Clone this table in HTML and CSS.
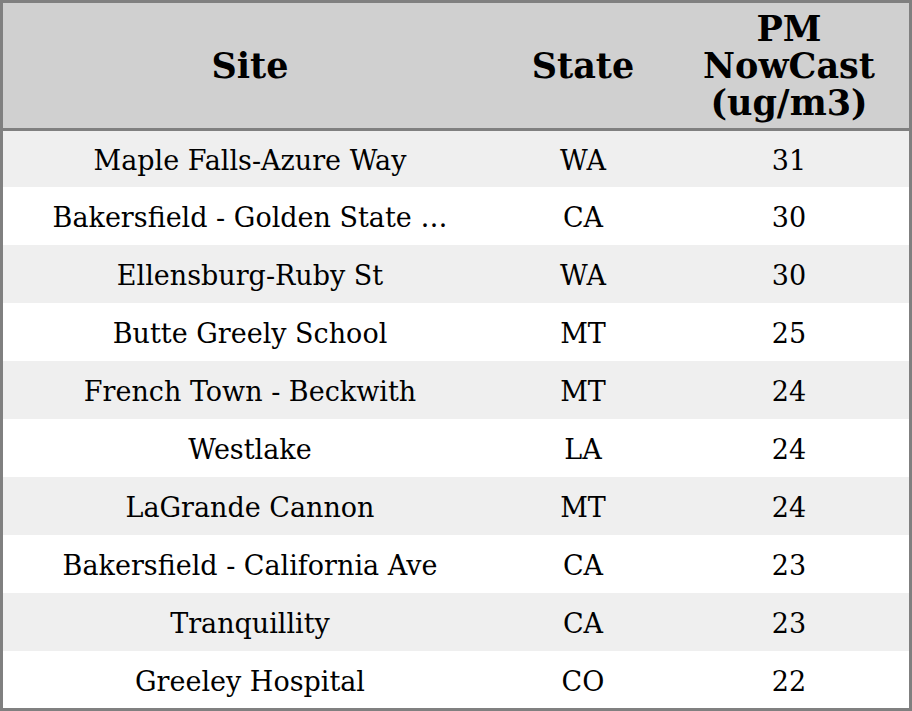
FILE: index.html
```html
<!DOCTYPE html>
<html>
<head>
<meta charset="utf-8">
<link rel="stylesheet" href="styles.css">
</head>
<body>
<table class="tbl">
  <colgroup>
    <col class="c-site">
    <col class="c-state">
    <col class="c-pm">
  </colgroup>
  <thead>
    <tr><th>Site</th><th>State</th><th>PM<br>NowCast<br>(ug/m3)</th></tr>
  </thead>
  <tbody>
    <tr><td>Maple Falls-Azure Way</td><td>WA</td><td>31</td></tr>
    <tr><td>Bakersfield - Golden State …</td><td>CA</td><td>30</td></tr>
    <tr><td>Ellensburg-Ruby St</td><td>WA</td><td>30</td></tr>
    <tr><td>Butte Greely School</td><td>MT</td><td>25</td></tr>
    <tr><td>French Town - Beckwith</td><td>MT</td><td>24</td></tr>
    <tr><td>Westlake</td><td>LA</td><td>24</td></tr>
    <tr><td>LaGrande Cannon</td><td>MT</td><td>24</td></tr>
    <tr><td>Bakersfield - California Ave</td><td>CA</td><td>23</td></tr>
    <tr><td>Tranquillity</td><td>CA</td><td>23</td></tr>
    <tr><td>Greeley Hospital</td><td>CO</td><td>22</td></tr>
  </tbody>
</table>
</body>
</html>
```
FILE: styles.css
```css
html, body {
  margin: 0;
  padding: 0;
  background: #ffffff;
}
.tbl {
  box-sizing: border-box;
  width: 912px;
  border-collapse: separate;
  border-spacing: 0;
  table-layout: fixed;
  border: 3px solid #808080;
  font-family: "DejaVu Serif", serif;
  color: #000;
}
.c-site { width: 494px; }
.c-state { width: 172px; }
.c-pm { width: 240px; }
.tbl th {
  box-sizing: border-box;
  background: #d0d0d0;
  font-size: 35px;
  font-weight: bold;
  line-height: 37px;
  height: 128px;
  padding: 0 0 0 0;
  text-align: center;
  vertical-align: middle;
  border-bottom: 3px solid #808080;
}
.tbl td {
  box-sizing: border-box;
  font-size: 27px;
  line-height: 30px;
  text-align: center;
  vertical-align: middle;
  padding: 4px 0 0 0;
  height: 58px;
  white-space: nowrap;
}
.tbl tbody tr:first-child td { height: 56px; }
.tbl tbody tr:last-child td { height: 57px; }
.tbl tbody tr:nth-child(odd) { background: #efefef; }
.tbl tbody tr:nth-child(even) { background: #ffffff; }
```
